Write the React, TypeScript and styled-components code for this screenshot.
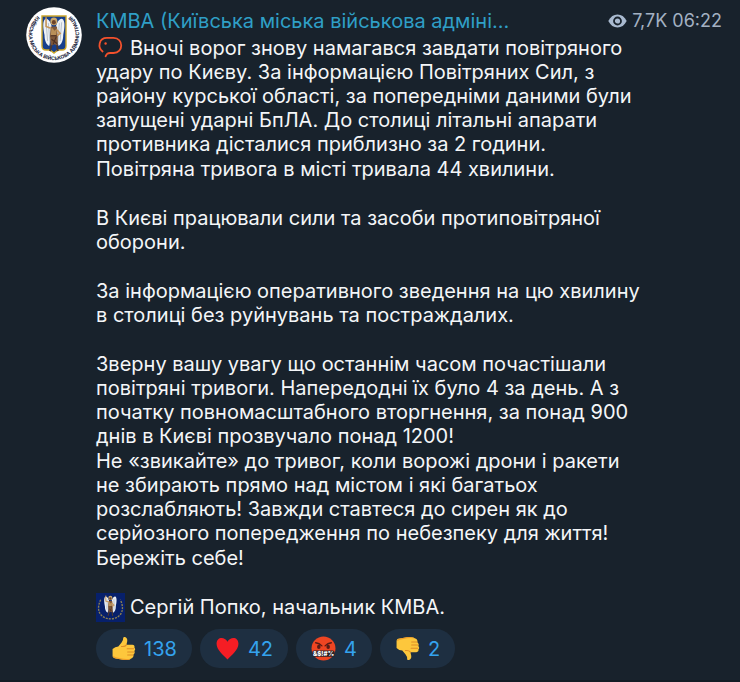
import React from "react";
import styled, { createGlobalStyle } from "styled-components";

const GlobalStyle = createGlobalStyle`
  * { box-sizing: border-box; }
  body {
    margin: 0;
    background: #18222c;
    color: #f4f6f8;
    font-family: Inter, "Noto Sans", sans-serif;
    font-size: 20px;
    line-height: 24px;
  }
`;

const Message = styled.article`
  display: flex;
  align-items: flex-start;
  gap: 14px;
  min-height: 100vh;
  padding: 7px 18px 12px 26px;
  border-bottom: 2px solid #131b24;
`;

const Content = styled.div`
  flex: 1;
  min-width: 0;
`;

const Header = styled.header`
  display: flex;
  align-items: center;
  justify-content: space-between;
  height: 27px;
`;

const Author = styled.a`
  color: #2f9fc6;
  text-decoration: none;
  white-space: nowrap;
`;

const Meta = styled.div`
  display: flex;
  align-items: center;
  gap: 5px;
  color: #a3b1c2;
  font-size: 18px;
  white-space: nowrap;
`;

const Body = styled.div`
  display: flex;
  flex-direction: column;
  gap: 25px;
  max-width: 548px;
  padding-top: 2px;
`;

const Group = styled.div`
  display: grid;
  gap: 1px;
`;

const Paragraph = styled.p`
  margin: 0;
`;

const Signature = styled.div`
  display: flex;
  align-items: center;
  gap: 5px;
  height: 24px;
`;

const Reactions = styled.div`
  display: flex;
  flex-wrap: wrap;
  gap: 8px;
  padding-top: 10px;
`;

const Reaction = styled.button`
  display: flex;
  align-items: center;
  gap: 8px;
  height: 39px;
  padding: 0 15px;
  border: 0;
  border-radius: 20px;
  background: #1e2f41;
  color: #34a3ee;
  font: inherit;
  cursor: pointer;
`;

const Icon = styled.svg<{ $size: number }>`
  display: block;
  flex: none;
  width: ${(p) => p.$size}px;
  height: ${(p) => p.$size}px;
`;

const InlineIcon = styled.svg`
  display: inline-block;
  width: 28px;
  height: 24px;
  margin-right: 6px;
  vertical-align: top;
`;

const SealText = styled.text`
  font-family: Inter, sans-serif;
  font-size: 5px;
  font-weight: 700;
  fill: #17213a;
`;

const Archangel = () => (
  <g>
    <path d="M25 23C23 13 18 9 15 12C12 16 14 25 15 30C15 36 17 41 21 43L24 31Z" fill="#edf1f5" />
    <path d="M29 23C31 13 36 9 39 12C42 16 40 25 39 30C39 36 37 41 33 43L30 31Z" fill="#edf1f5" />
    <path d="M17 15L19 37M20 16L22 40M37 15L35 37M34 16L32 40" stroke="#9ba8ba" strokeWidth=".8" />
    <path d="M23 20L31 20L32 31L32 43L28 41L23 43L22 31Z" fill="#7d5638" />
    <path d="M24 21L28 25L31 22L30 30L23 31Z" fill="#b98f58" />
    <path d="M23 31H32M24 35L31 40M30 32L26 41" stroke="#4a2d22" strokeWidth="1.2" />
    <path d="M24 42L22 49M31 42L32 49" stroke="#4d3830" strokeWidth="2.5" />
    <path d="M23 22L17 20L17 9M31 24L35 28L31 31" fill="none" stroke="#c79557" strokeWidth="2" />
    <circle cx="27" cy="14" r="4.5" fill="#caa66a" />
    <circle cx="27" cy="15" r="2.6" fill="#6b422b" />
  </g>
);

const Seal = () => (
  <Icon $size={56} viewBox="0 0 56 56" role="img" aria-label="КМВА">
    <defs>
      <path id="seal-arc" d="M18 4.800A25.200 25.200 0 1 0 38 4.800" />
    </defs>
    <circle cx="28" cy="28" r="27.8" fill="#fff" />
    <path d="M16 9H40V39Q40 43 36 43H32L28 46L24 43H20Q16 43 16 39Z" fill="#173f8c" stroke="#cda72b" strokeWidth="1.4" />
    <g transform="translate(6.800 2.500) scale(.78 .85)">
      <Archangel />
    </g>
    <SealText>
      <textPath href="#seal-arc" startOffset="50%" textAnchor="middle">
        КИЇВСЬКА МІСЬКА ВІЙСЬКОВА АДМІНІСТРАЦІЯ
      </textPath>
    </SealText>
  </Icon>
);

const SmallSeal = () => (
  <Icon $size={29} viewBox="0 0 56 56" aria-hidden="true">
    <rect width="56" height="56" fill="#07206b" />
    <path d="M9 13C-3 39 14 50 28 50S59 39 47 13" fill="none" stroke="#8d8050" strokeWidth="2.6" strokeDasharray="4 2" />
    <g transform="translate(4 -4) scale(.88 .98)">
      <Archangel />
    </g>
  </Icon>
);

const Bubble = () => (
  <InlineIcon viewBox="0 0 28 24" fill="none" aria-hidden="true">
    <path
      d="M6.600 15.500C1.500 11.500 2.600 1.900 11 1.900H17.500C27.800 1.900 27.800 17 17.500 17H14C11 17 10.700 18 9.600 20.300"
      stroke="#f4512c"
      strokeWidth="1.8"
      strokeLinecap="round"
    />
    <circle cx="9.6" cy="7.500" r="1.2" fill="#f4512c" />
  </InlineIcon>
);

const Eye = () => (
  <svg width="19" height="14" viewBox="0 0 19 14" aria-hidden="true">
    <path d="M.3 7C2.5 2.6 5.7.5 9.5.5S16.500 2.600 18.700 7C16.500 11.400 13.300 13.500 9.500 13.500S2.500 11.400.3 7Z" fill="#a9bad0" />
    <circle cx="9.500" cy="7" r="3.500" fill="none" stroke="#18222c" strokeWidth="1.800" />
  </svg>
);

const thumbPath =
  "M1.500 12.500Q4 10 7 10L10 6.500Q12 4 11.700 1.800Q12 .5 13.500 1Q16.200 2 15.500 5.500L14.800 8.500H20.500Q23 8.800 22.500 11Q24 12.500 22.500 14.500Q23.500 16.500 21.500 18Q22 20.500 19.500 21.500Q17.500 23.500 11.500 22.800L6 21.800Q2 21.800 1.500 19.500Z";

const Thumb = ({ down = false }: { down?: boolean }) => (
  <Icon $size={25} viewBox="0 0 24 24" aria-hidden="true">
    <g transform={down ? "translate(0 24) scale(1 -1)" : undefined}>
      <path d={thumbPath} fill="#fdc73c" />
      <path d="M2 19Q4 21 8 21.200Q15 23 19.500 21.500Q17 23.700 11 22.800L5 21.700Q2 21 2 19Z" fill="#ee9b27" />
      <path d="M15.500 12.300H21.700M16 15.300H21.700M16 18.300H21M10 10Q13.500 10.500 14.800 8.500" fill="none" stroke="#de8d25" strokeWidth="1" strokeLinecap="round" />
    </g>
  </Icon>
);

const Heart = () => (
  <Icon $size={25} viewBox="0 0 24 24" aria-hidden="true">
    <path d="M12 22.500C8 18.500 1.500 13.500 1.500 7.500C1.500 .8 9 .2 12 5.500C15 .2 22.500 .8 22.500 7.500C22.500 13.500 16 18.500 12 22.500Z" fill="#f51d24" />
  </Icon>
);

const Censored = styled.text`
  font-family: Inter, sans-serif;
  font-size: 6px;
  font-weight: 800;
  fill: #fff;
`;

const AngryFace = () => (
  <Icon $size={25} viewBox="0 0 24 24" aria-hidden="true">
    <circle cx="12" cy="12" r="11.500" fill="#ee4522" />
    <path d="M4.500 6.500Q8 7 10.500 9.500M19.500 6.500Q16 7 13.500 9.500" fill="none" stroke="#571b16" strokeWidth="1.300" strokeLinecap="round" />
    <ellipse cx="7.500" cy="10.500" rx="1.700" ry="2" fill="#571b16" />
    <ellipse cx="16.500" cy="10.500" rx="1.700" ry="2" fill="#571b16" />
    <rect x="1.200" y="14" width="21.600" height="6" rx="2" fill="#292329" />
    <Censored x="12" y="19.200" textAnchor="middle">&amp;$!#%</Censored>
  </Icon>
);

const reactions = [
  { name: "Подобається", icon: <Thumb />, count: 138 },
  { name: "Серце", icon: <Heart />, count: 42 },
  { name: "Злість", icon: <AngryFace />, count: 4 },
  { name: "Не подобається", icon: <Thumb down />, count: 2 },
];

export default function App() {
  return (
    <>
      <GlobalStyle />
      <Message>
        <Seal />
        <Content>
          <Header>
            <Author href="#">КМВА (Київська міська військова адміні...</Author>
            <Meta>
              <Eye />
              <span>7,7K 06:22</span>
            </Meta>
          </Header>
          <Body>
            <Group>
              <Paragraph>
                <Bubble />
                Вночі ворог знову намагався завдати повітряного удару по Києву. За інформацією Повітряних Сил, з району курської області, за попередніми даними були запущені ударні БпЛА. До столиці літальні апарати противника дісталися приблизно за 2 години.
              </Paragraph>
              <Paragraph>Повітряна тривога в місті тривала 44 хвилини.</Paragraph>
            </Group>
            <Paragraph>В Києві працювали сили та засоби протиповітряної оборони.</Paragraph>
            <Paragraph>За інформацією оперативного зведення на цю хвилину в столиці без руйнувань та постраждалих.</Paragraph>
            <Group>
              <Paragraph>
                Зверну вашу увагу що останнім часом почастішали повітряні тривоги. Напередодні їх було 4 за день. А з початку повномасштабного вторгнення, за понад 900 днів в Києві прозвучало понад 1200!
              </Paragraph>
              <Paragraph>
                Не «звикайте» до тривог, коли ворожі дрони і ракети не збирають прямо над містом і які багатьох розслабляють! Завжди ставтеся до сирен як до серйозного попередження по небезпеку для життя!
              </Paragraph>
              <Paragraph>Бережіть себе!</Paragraph>
            </Group>
            <Signature>
              <SmallSeal />
              <span>Сергій Попко, начальник КМВА.</span>
            </Signature>
          </Body>
          <Reactions>
            {reactions.map((r) => (
              <Reaction key={r.name} type="button" aria-label={`${r.name}: ${r.count}`}>
                {r.icon}
                <span>{r.count}</span>
              </Reaction>
            ))}
          </Reactions>
        </Content>
      </Message>
    </>
  );
}
